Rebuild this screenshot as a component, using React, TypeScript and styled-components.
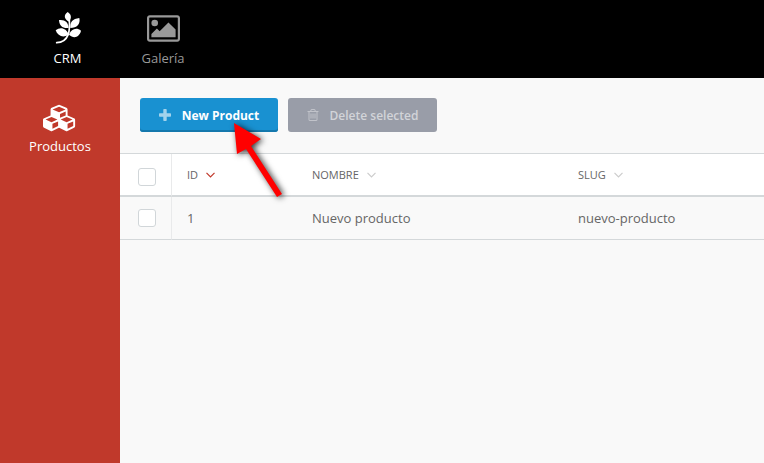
import React from "react";
import styled, { createGlobalStyle } from "styled-components";

const GlobalStyle = createGlobalStyle`
  *, *::before, *::after { box-sizing: border-box; }
  body {
    margin: 0;
    background: #f9f9f9;
    color: #666;
    font-family: "Open Sans", "Noto Sans", sans-serif;
    font-size: 13px;
    line-height: 20px;
  }
`;

const Page = styled.div`
  display: flex;
  flex-direction: column;
  min-height: 100vh;
`;

const TopNav = styled.nav`
  display: flex;
  gap: 28px;
  height: 78px;
  padding: 0 20px;
  background: #000;
`;

const TopNavLink = styled.a<{ $active?: boolean; $width: number }>`
  display: flex;
  flex-direction: column;
  align-items: center;
  gap: 4px;
  width: ${(p) => p.$width}px;
  padding-top: 12px;
  color: ${(p) => (p.$active ? "#fff" : "#999")};
  text-decoration: none;
`;

const IconBox = styled.span`
  display: flex;
  align-items: center;
  justify-content: center;
  height: 32px;
`;

const Body = styled.div`
  display: flex;
  flex: 1;
`;

const Sidebar = styled.aside`
  flex: 0 0 120px;
  padding-top: 24px;
  background: #c0392b;
`;

const SideLink = styled.a`
  display: flex;
  flex-direction: column;
  align-items: center;
  gap: 2px;
  color: #fff;
  text-decoration: none;
`;

const Main = styled.main`
  flex: 1;
  min-width: 0;
`;

const Toolbar = styled.div`
  display: flex;
  gap: 10px;
  padding: 20px 20px 21px;
`;

const ButtonHolder = styled.div`
  position: relative;
`;

const Button = styled.button<{ $primary?: boolean }>`
  display: flex;
  align-items: center;
  justify-content: center;
  gap: 11px;
  width: ${(p) => (p.$primary ? 138 : 149)}px;
  height: 34px;
  padding: 0;
  border: 0;
  border-radius: 3px;
  background: ${(p) => (p.$primary ? "#1991d1" : "#999da8")};
  box-shadow: ${(p) => (p.$primary ? "inset 0 -2px 0 #1578ad" : "none")};
  color: ${(p) => (p.$primary ? "#fff" : "#d2d4d9")};
  font-family: inherit;
  font-size: 12px;
  font-weight: ${(p) => (p.$primary ? 700 : 600)};
  white-space: nowrap;
`;

const Pointer = styled.svg`
  position: absolute;
  left: 84px;
  top: 16px;
  z-index: 1;
  overflow: visible;
  pointer-events: none;
  filter: drop-shadow(2px 1px 3px rgba(0, 0, 0, 0.8));
`;

const Table = styled.table`
  width: 100%;
  table-layout: fixed;
  border-collapse: separate;
  border-spacing: 0;
  border-top: 1px solid #d4d8da;
`;

const Column = styled.col<{ $width?: number }>`
  width: ${(p) => (p.$width ? `${p.$width}px` : "auto")};
`;

const HeadCell = styled.th`
  height: 43px;
  padding: 0 15px;
  border-bottom: 2px solid #d4d8da;
  background: #fff;
  font-weight: 400;
  text-align: left;
`;

const Cell = styled.td`
  height: 43px;
  padding: 0 15px;
  border-bottom: 1px solid #d4d8da;
  white-space: nowrap;
`;

const HeadCheckCell = styled(HeadCell)`
  padding: 4px 15px 0 18px;
  border-right: 1px solid #e9eaeb;
`;

const CheckCell = styled(Cell)`
  padding: 0 15px 0 18px;
  border-right: 1px solid #e9eaeb;
`;

const SortButton = styled.button<{ $active?: boolean }>`
  display: flex;
  align-items: center;
  gap: 8px;
  padding: 0;
  border: 0;
  background: none;
  color: #666;
  font: inherit;
  font-size: 11px;
  text-transform: uppercase;

  svg {
    color: ${(p) => (p.$active ? "#c0392b" : "#ccc")};
  }
`;

const Checkbox = styled.input`
  display: block;
  width: 18px;
  height: 18px;
  margin: 0;
  appearance: none;
  border: 1px solid #d1d6d9;
  border-radius: 3px;
  background: #fff;

  &:checked {
    background: #1991d1;
  }
`;

const LeafIcon = () => (
  <svg width="26" height="32" viewBox="20 12 78 96" fill="currentColor" aria-hidden="true">
    <path d="M58 12C69 19 71 30 62 41C47 34 45 21 58 12Z" />
    <path d="M32 36C50 34 60 43 61 60C43 62 33 54 32 36Z" />
    <path d="M93 30C97 48 86 60 66 60C64 43 73 32 93 30Z" />
    <path d="M22 67C36 55 54 61 61 79C47 91 29 86 22 67Z" />
    <path d="M98 68C93 87 77 94 62 80C69 63 84 57 98 68Z" />
    <path d="M63 36C64 52 64 65 60 79C54 94 41 104 25 104" fill="none" stroke="currentColor" strokeWidth="5" strokeLinecap="round" />
  </svg>
);

const PictureIcon = () => (
  <svg width="33" height="27" viewBox="-64 128 1920 1536" fill="currentColor" aria-hidden="true">
    <circle cx="384" cy="576" r="192" />
    <path d="M1600 960v448h-1408v-192l320-320 160 160 512-512zM1696 256h-1600q-13 0-22.5 9.5t-9.5 22.5v1216q0 13 9.5 22.5t22.5 9.5h1600q13 0 22.5-9.5t9.5-22.5v-1216q0-13-9.5-22.5t-22.5-9.5zm160 32v1216q0 66-47 113t-113 47h-1600q-66 0-113-47t-47-113v-1216q0-66 47-113t113-47h1600q66 0 113 47t47 113z" />
  </svg>
);

const CubesIcon = () => (
  <svg width="34" height="28" viewBox="0 0 2304 1792" fill="currentColor" aria-hidden="true">
    <path d="M640 1632l384-192v-314l-384 164v342zm-64-454l404-173-404-173-404 173zm1088 454l384-192v-314l-384 164v342zm-64-454l404-173-404-173-404 173zm-448-293l384-165v-266l-384 164v267zm-64-379l441-189-441-189-441 189zm1088 518v416q0 36-19 67t-52 47l-448 224q-25 14-57 14t-57-14l-448-224q-4-2-7-4-2 2-7 4l-448 224q-25 14-57 14t-57-14l-448-224q-33-16-52-47t-19-67v-416q0-38 21.5-70t56.5-48l434-186v-400q0-38 21.5-70t56.5-48l448-192q23-10 50-10t50 10l448 192q35 16 56.5 48t21.5 70v400l434 186q36 16 57 48t21 70z" />
  </svg>
);

const PlusIcon = () => (
  <svg width="12" height="12" viewBox="0 0 12 12" fill="currentColor" opacity="0.6" aria-hidden="true">
    <path d="M5 0h2q.7 0 .7.7v3.6h3.6q.7 0 .7.7v2q0 .7-.7.7H7.700v3.600q0 .7-.7.7H5q-.7 0-.7-.7V7.700H.7Q0 7.700 0 7V5q0-.7.7-.7h3.600V.7Q4.300 0 5 0z" />
  </svg>
);

const TrashIcon = () => (
  <svg width="12" height="12" viewBox="192 128 1408 1536" fill="currentColor" opacity="0.7" aria-hidden="true">
    <path d="M704 736v576q0 14-9 23t-23 9h-64q-14 0-23-9t-9-23v-576q0-14 9-23t23-9h64q14 0 23 9t9 23zm256 0v576q0 14-9 23t-23 9h-64q-14 0-23-9t-9-23v-576q0-14 9-23t23-9h64q14 0 23 9t9 23zm256 0v576q0 14-9 23t-23 9h-64q-14 0-23-9t-9-23v-576q0-14 9-23t23-9h64q14 0 23 9t9 23zm128 724v-948h-896v948q0 22 7 40.5t14.5 27 10.5 8.5h832q3 0 10.5-8.5t14.5-27 7-40.5zm-672-1076h448l-48-117q-7-9-17-11h-317q-10 2-17 11zm928 32v64q0 14-9 23t-23 9h-96v948q0 83-47 143.5t-113 60.5h-832q-66 0-113-58.5t-47-141.5v-952h-96q-14 0-23-9t-9-23v-64q0-14 9-23t23-9h309l70-167q15-37 54-63t79-26h320q40 0 79 26t54 63l70 167h309q14 0 23 9t9 23z" />
  </svg>
);

const ChevronIcon = () => (
  <svg width="9" height="6" viewBox="0 0 9 6" fill="none" stroke="currentColor" strokeWidth="1.200" aria-hidden="true">
    <path d="M.5 .8L4.500 4.800L8.500 .8" />
  </svg>
);

const columns = [
  { label: "ID", active: true },
  { label: "Nombre", active: false },
  { label: "Slug", active: false },
];

const products = [{ id: 1, nombre: "Nuevo producto", slug: "nuevo-producto" }];

export default function App() {
  return (
    <Page>
      <GlobalStyle />
      <TopNav>
        <TopNavLink href="#crm" $active $width={95}>
          <IconBox><LeafIcon /></IconBox>
          CRM
        </TopNavLink>
        <TopNavLink href="#galeria" $width={40}>
          <IconBox><PictureIcon /></IconBox>
          Galería
        </TopNavLink>
      </TopNav>
      <Body>
        <Sidebar>
          <SideLink href="#productos">
            <IconBox><CubesIcon /></IconBox>
            Productos
          </SideLink>
        </Sidebar>
        <Main>
          <Toolbar>
            <ButtonHolder>
              <Button type="button" $primary>
                <PlusIcon />
                New Product
              </Button>
              <Pointer width="60" height="84" viewBox="0 0 60 84" aria-hidden="true">
                <path d="M10 9L37 25L27 32L58 80L53 83L22 35L13 40Z" fill="#f00" />
              </Pointer>
            </ButtonHolder>
            <Button type="button" disabled>
              <TrashIcon />
              Delete selected
            </Button>
          </Toolbar>
          <Table>
            <colgroup>
              <Column $width={52} />
              <Column $width={125} />
              <Column $width={266} />
              <Column />
            </colgroup>
            <thead>
              <tr>
                <HeadCheckCell scope="col">
                  <Checkbox type="checkbox" aria-label="Seleccionar todo" />
                </HeadCheckCell>
                {columns.map((column) => (
                  <HeadCell key={column.label} scope="col">
                    <SortButton type="button" $active={column.active}>
                      {column.label}
                      <ChevronIcon />
                    </SortButton>
                  </HeadCell>
                ))}
              </tr>
            </thead>
            <tbody>
              {products.map((product) => (
                <tr key={product.id}>
                  <CheckCell>
                    <Checkbox type="checkbox" aria-label={product.nombre} />
                  </CheckCell>
                  <Cell>{product.id}</Cell>
                  <Cell>{product.nombre}</Cell>
                  <Cell>{product.slug}</Cell>
                </tr>
              ))}
            </tbody>
          </Table>
        </Main>
      </Body>
    </Page>
  );
}
